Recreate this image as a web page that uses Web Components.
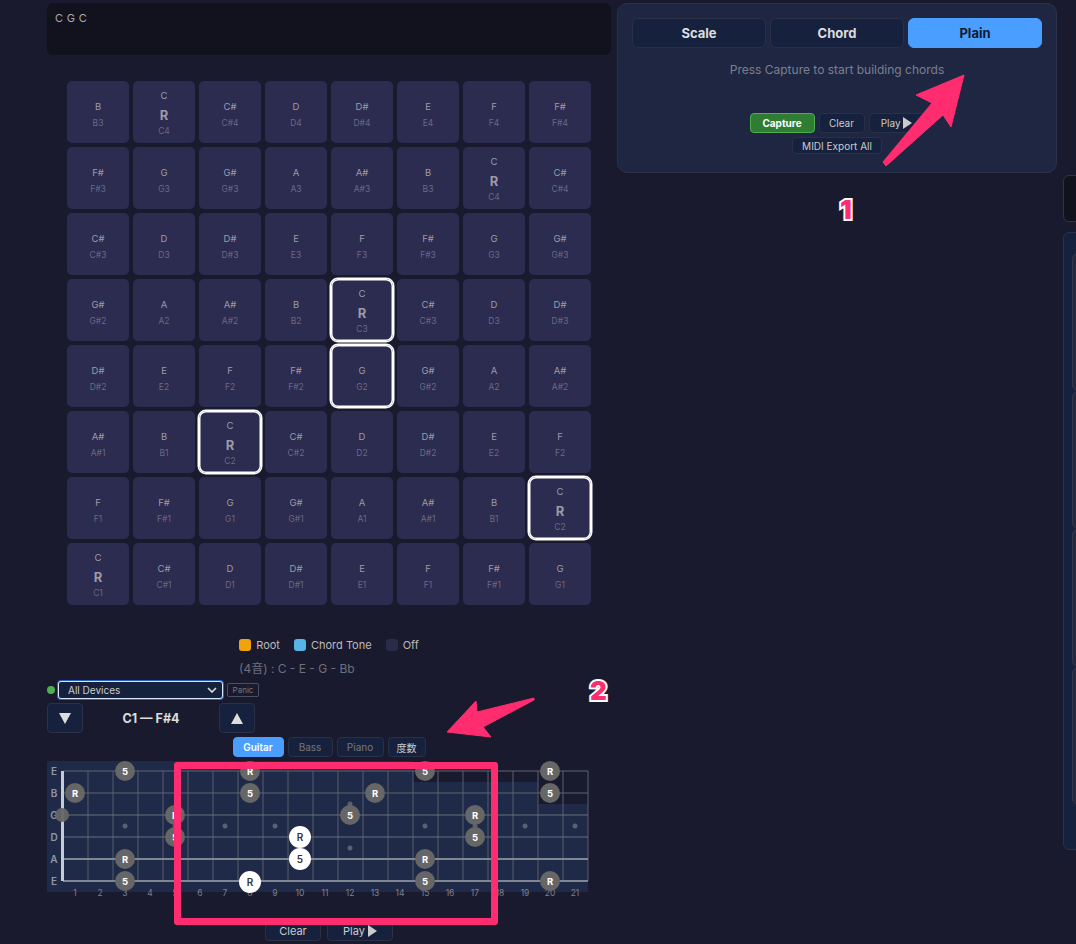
<!DOCTYPE html>
<html>
<head>
<meta charset="utf-8">
<style>
  html, body { margin: 0; height: 944px; overflow: hidden; background: #1a1a2e; }
  body { font-family: Inter, "Noto Sans CJK JP", sans-serif; color: #ccc; position: relative; }
</style>
</head>
<body>
<app-shell></app-shell>
<script>
const NOTES = ['C', 'C#', 'D', 'D#', 'E', 'F', 'F#', 'G', 'G#', 'A', 'A#', 'B'];

class TabButton extends HTMLElement {
  connectedCallback() {
    this.attachShadow({ mode: 'open' });
    this.shadowRoot.innerHTML = `
      <style>
        :host { display: flex; align-items: center; justify-content: center; box-sizing: border-box;
          background: #16213e; border: 1px solid #2a3045; border-radius: 4px; color: #ccc;
          font-size: 10px; white-space: nowrap; height: 20px; }
        :host([variant=active]) { background: #4a9eff; border-color: #4a9eff; color: #fff; font-weight: 600; }
        :host([variant=capture]) { background: #2e7d32; border-color: #4caf50; color: #fff; font-weight: 700; }
        :host([variant=dim]) { color: #777; }
        :host([variant=big]) { height: 30px; flex: 1; font-size: 13px; font-weight: 700; border-radius: 6px; color: #ddd; }
        :host([variant=bigactive]) { height: 30px; flex: 1; font-size: 13px; font-weight: 700; border-radius: 6px;
          background: #4a9eff; border-color: #4a9eff; color: #111a2e; }
      </style>
      <slot></slot>
    `;
  }
}
customElements.define('tab-button', TabButton);

class ChordPanel extends HTMLElement {
  connectedCallback() {
    this.attachShadow({ mode: 'open' });
    this.shadowRoot.innerHTML = `
      <style>
        :host { display: flex; flex-direction: column; box-sizing: border-box; width: 440px; height: 170px;
          background: #1e2642; border: 1px solid #2b3148; border-radius: 10px; padding: 14px 14px 0; }
        .tabs { display: flex; gap: 4px; }
        .hint { text-align: center; color: #7d7f8c; font-size: 12px; margin-top: 15px; height: 14px; line-height: 14px; }
        .row { display: flex; justify-content: center; gap: 4px; margin-top: 36px; }
        .row2 { display: flex; justify-content: center; margin-top: 4px; }
      </style>
      <div class="tabs">
        <tab-button variant="big">Scale</tab-button>
        <tab-button variant="big">Chord</tab-button>
        <tab-button variant="bigactive">Plain</tab-button>
      </div>
      <div class="hint">Press Capture to start building chords</div>
      <div class="row">
        <tab-button variant="capture" style="width:65px">Capture</tab-button>
        <tab-button style="width:46px">Clear</tab-button>
        <tab-button style="width:56px">Play&nbsp;<svg width="9" height="12" viewBox="0 0 9 12"><path d="M0 0L9 6L0 12Z" fill="#ccc"/></svg></tab-button>
      </div>
      <div class="row2"><tab-button style="width:90px;height:17px">MIDI Export All</tab-button></div>
    `;
  }
}
customElements.define('chord-panel', ChordPanel);

class PadCell extends HTMLElement {
  connectedCallback() {
    this.attachShadow({ mode: 'open' });
    const note = this.getAttribute('note');
    const name = this.getAttribute('name');
    const root = note === 'C';
    this.shadowRoot.innerHTML = `
      <style>
        :host { display: flex; flex-direction: column; align-items: center; box-sizing: border-box;
          width: 62px; height: 62px; background: #2c2b50; border-radius: 5px; padding-top: ${root ? 9 : 20}px; }
        :host([on]) { box-shadow: 0 0 0 1.5px #fff, inset 0 0 0 1.5px #fff; border-radius: 7px; }
        .n { font-size: 9.5px; line-height: 12px; color: #9c9ca8; }
        .r { font-size: 13px; line-height: 16px; font-weight: 700; color: #9c9ca8; margin-top: 5px; }
        .o { font-size: 8.5px; line-height: 11px; color: #6a6a84; margin-top: ${root ? 3 : 5}px; }
      </style>
      <div class="n">${note}</div>
      ${root ? '<div class="r">R</div>' : ''}
      <div class="o">${name}</div>
    `;
  }
}
customElements.define('pad-cell', PadCell);

class PadGrid extends HTMLElement {
  connectedCallback() {
    this.attachShadow({ mode: 'open' });
    const on = ['3,4', '4,4', '5,2', '6,7'];
    let cells = '';
    for (let r = 0; r < 8; r++) {
      for (let c = 0; c < 8; c++) {
        const midi = 12 + (7 - r) * 5 + c; // C1 = 12 bottom left, rows go up a fourth
        const note = NOTES[midi % 12];
        const name = note + Math.floor(midi / 12);
        cells += `<pad-cell note="${note}" name="${name}" ${on.includes(r + ',' + c) ? 'on' : ''}></pad-cell>`;
      }
    }
    this.shadowRoot.innerHTML = `
      <style>
        :host { display: grid; grid-template-columns: repeat(8, 62px); grid-auto-rows: 62px; gap: 4px;
          margin: 26px 0 0 20px; width: 524px; }
      </style>
      ${cells}
    `;
  }
}
customElements.define('pad-grid', PadGrid);

class PadLegend extends HTMLElement {
  connectedCallback() {
    this.attachShadow({ mode: 'open' });
    this.shadowRoot.innerHTML = `
      <style>
        :host { display: flex; justify-content: center; gap: 14px; font-size: 11px; color: #bbb; height: 14px; align-items: center; margin-top: 33px; }
        span { display: flex; align-items: center; gap: 5px; }
        i { width: 12px; height: 12px; border-radius: 3px; display: block; }
      </style>
      <span><i style="background:#f0a30a"></i>Root</span>
      <span><i style="background:#56b4e9"></i>Chord Tone</span>
      <span><i style="background:#2a2a4a"></i>Off</span>
    `;
  }
}
customElements.define('pad-legend', PadLegend);

class DeviceBar extends HTMLElement {
  connectedCallback() {
    this.attachShadow({ mode: 'open' });
    this.shadowRoot.innerHTML = `
      <style>
        :host { display: flex; align-items: center; height: 18px; margin-top: 4px; }
        .dot { width: 8px; height: 8px; border-radius: 50%; background: #4caf50; margin-right: 3px; }
        .sel { box-sizing: border-box; width: 165px; height: 18px; background: #16213e; border: 1px solid #d8e6fb;
          box-shadow: 0 0 0 1px #2a62c4; border-radius: 3px; color: #ccc; font-size: 10px; display: flex;
          align-items: center; justify-content: space-between; padding: 0 5px 0 9px; }
        .panic { box-sizing: border-box; width: 32px; height: 14px; margin-left: 4px; border: 1px solid #4a5063;
          border-radius: 2px; color: #777; font-size: 8px; display: flex; align-items: center; justify-content: center; }
      </style>
      <div class="dot"></div>
      <div class="sel">All Devices
        <svg width="10" height="6" viewBox="0 0 10 6"><path d="M1 1L5 5L9 1" fill="none" stroke="#ddd" stroke-width="1.6"/></svg>
      </div>
      <div class="panic">Panic</div>
    `;
  }
}
customElements.define('device-bar', DeviceBar);

class OctaveBar extends HTMLElement {
  connectedCallback() {
    this.attachShadow({ mode: 'open' });
    this.shadowRoot.innerHTML = `
      <style>
        :host { display: flex; align-items: center; height: 30px; margin-top: 4px; width: 208px; justify-content: space-between; }
        .b { box-sizing: border-box; width: 36px; height: 30px; background: #16213e; border: 1px solid #2a3045; border-radius: 4px;
          display: flex; align-items: center; justify-content: center; }
        .l { font-size: 12.5px; font-weight: 700; color: #ddd; }
      </style>
      <div class="b"><svg width="12" height="11" viewBox="0 0 12 11"><path d="M0 0H12L6 11Z" fill="#ddd"/></svg></div>
      <div class="l">C1 — F#4</div>
      <div class="b"><svg width="12" height="11" viewBox="0 0 12 11"><path d="M0 11H12L6 0Z" fill="#ddd"/></svg></div>
    `;
  }
}
customElements.define('octave-bar', OctaveBar);

class FretBoard extends HTMLElement {
  connectedCallback() {
    this.attachShadow({ mode: 'open' });
    const ys = [771, 793, 815, 837, 859, 881].map(y => y - 761);
    const names = ['E', 'B', 'G', 'D', 'A', 'E'];
    const fx = n => 3 + 25 * n; // fret number to x centre, board starts at page x 47
    let s = '';
    // board background, upper right part is cut away
    s += `<path d="M0 0H366V21H490V43H541V131H0Z" fill="#1e2a47"/>`;
    for (let i = 0; i <= 21; i++) {
      const x = 16 + 25 * i;
      s += `<line x1="${x}" y1="10" x2="${x}" y2="120" stroke="#4d5566" stroke-width="1.2"/>`;
    }
    ys.forEach((y, i) => {
      const c = i < 2 ? '#5d6473' : i < 4 ? '#68707e' : '#7f8792';
      s += `<line x1="16" y1="${y}" x2="541" y2="${y}" stroke="${c}" stroke-width="${i < 4 ? 1.2 : 1.8}"/>`;
      s += `<text x="7" y="${y + 4}" font-size="10" font-weight="600" fill="#8f97a8" text-anchor="middle">${names[i]}</text>`;
    });
    s += `<rect x="14" y="10" width="3" height="110" fill="#c4ccd8"/>`;
    [[3, 65], [5, 65], [7, 65], [9, 65], [12, 43], [12, 87], [15, 65], [17, 65], [19, 65], [21, 65]].forEach(([n, y]) => {
      s += `<circle cx="${fx(n)}" cy="${y}" r="2.5" fill="#59616f"/>`;
    });
    for (let n = 1; n <= 21; n++) {
      s += `<text x="${fx(n)}" y="135" font-size="8.5" fill="#7c8290" text-anchor="middle">${n}</text>`;
    }
    const dots = [
      [0, 3, '5'], [0, 8, 'R'], [0, 15, '5'], [0, 20, 'R'],
      [1, 1, 'R'], [1, 8, '5'], [1, 13, 'R'], [1, 20, '5'],
      [2, 5, 'R'], [2, 12, '5'], [2, 17, 'R'],
      [3, 5, '5'], [3, 17, '5'],
      [4, 3, 'R'], [4, 15, 'R'],
      [5, 3, '5'], [5, 15, '5'], [5, 20, 'R']
    ];
    s += `<circle cx="15" cy="${ys[2]}" r="7" fill="#666" fill-opacity=".95"/>`;
    dots.forEach(([st, n, t]) => {
      s += `<circle cx="${fx(n)}" cy="${ys[st]}" r="10" fill="#666"/>`;
      s += `<text x="${fx(n)}" y="${ys[st] + 3.5}" font-size="9.5" font-weight="700" fill="#fff" text-anchor="middle">${t}</text>`;
    });
    [[3, 10, 'R', 0], [4, 10, '5', 0], [5, 8, 'R', 1]].forEach(([st, n, t, d]) => {
      s += `<circle cx="${fx(n)}" cy="${ys[st] + d}" r="11" fill="#fff"/>`;
      s += `<text x="${fx(n)}" y="${ys[st] + d + 3.5}" font-size="10" font-weight="600" fill="#333" text-anchor="middle">${t}</text>`;
    });
    this.shadowRoot.innerHTML = `
      <style>
        :host { display: block; height: 141px; margin-top: 4px; }
        svg { display: block; overflow: visible; }
        text { font-family: Inter, sans-serif; }
      </style>
      <svg width="564" height="141" viewBox="0 0 564 141">${s}</svg>
    `;
  }
}
customElements.define('fret-board', FretBoard);

class MarkUp extends HTMLElement {
  connectedCallback() {
    this.attachShadow({ mode: 'open' });
    this.shadowRoot.innerHTML = `
      <style>
        :host { position: absolute; left: 0; top: 0; width: 1076px; height: 944px; pointer-events: none; }
        svg { position: absolute; left: 0; top: 0; }
        .num { position: absolute; font: 900 26px/30px Inter, sans-serif; color: #ff2d6f;
          -webkit-text-stroke: 4px #fff; paint-order: stroke fill; }
        .box { position: absolute; left: 174px; top: 762px; width: 324px; height: 163px; box-sizing: border-box;
          border: 7px solid #ff2d6f; border-radius: 3px; }
      </style>
      <svg width="1076" height="944">
        <path d="M964 75L916 95L932 103L883 162L886 166L943 115L951 127Z" fill="#ff2d6f" stroke="#ff2d6f" stroke-linejoin="round"/>
        <path d="M447 732L476 701L477 712L534 698L534 700L483 727L491 737Z" fill="#ff2d6f" stroke="#ff2d6f" stroke-linejoin="round"/>
      </svg>
      <div class="num" style="left:840px;top:195px">1</div>
      <div class="num" style="left:590px;top:676px">2</div>
      <div class="box"></div>
    `;
  }
}
customElements.define('mark-up', MarkUp);

class AppShell extends HTMLElement {
  connectedCallback() {
    this.attachShadow({ mode: 'open' });
    this.shadowRoot.innerHTML = `
      <style>
        :host { display: flex; gap: 6px; padding: 3px 0 0 47px; width: 1076px; box-sizing: border-box; }
        .left { width: 564px; flex: none; }
        .right { flex: none; width: 470px; }
        .text { box-sizing: border-box; height: 52px; background: #12121f; border-radius: 6px; padding: 8px 8px; font-size: 11px; letter-spacing: .3px; color: #aaa; }
        .chordname { font-size: 12px; color: #6e7080; padding-left: 192px; height: 16px; line-height: 16px; margin-top: 9px; }
        .tabs { display: flex; gap: 4px; justify-content: center; margin-top: 4px; }
        .bottom { display: flex; gap: 6px; justify-content: center; margin-top: 19px; }
        .bottom tab-button { font-size: 11px; }
        .side { margin-left: 446px; box-sizing: border-box; }
        .side .a { width: 40px; height: 45px; margin-top: 2px; background: #12121f; border: 1px solid #2f3346; border-radius: 6px; }
        .side .b { width: 40px; height: 618px; margin-top: 10px; background: #16213e; border: 1px solid #2b3148; border-radius: 6px; padding: 20px 0 0 8px; box-sizing: border-box; }
        .side .b div { height: 136px; background: #25293f; border: 1px solid #32374d; border-radius: 6px; }
      </style>
      <div class="left">
        <div class="text">C G C</div>
        <pad-grid></pad-grid>
        <pad-legend></pad-legend>
        <div class="chordname">(4音) : C - E - G - Bb</div>
        <device-bar></device-bar>
        <octave-bar></octave-bar>
        <div class="tabs">
          <tab-button variant="active" style="width:51px">Guitar</tab-button>
          <tab-button variant="dim" style="width:45px">Bass</tab-button>
          <tab-button variant="dim" style="width:47px">Piano</tab-button>
          <tab-button style="width:38px">度数</tab-button>
        </div>
        <fret-board></fret-board>
        <div class="bottom">
          <tab-button style="width:56px">Clear</tab-button>
          <tab-button style="width:66px">Play&nbsp;<svg width="9" height="12" viewBox="0 0 9 12"><path d="M0 0L9 6L0 12Z" fill="#ccc"/></svg></tab-button>
        </div>
      </div>
      <div class="right">
        <chord-panel></chord-panel>
        <div class="side">
          <div class="a"></div>
          <div class="b"><div></div><div></div><div></div><div></div></div>
        </div>
      </div>
    `;
    document.body.appendChild(document.createElement('mark-up'));
  }
}
customElements.define('app-shell', AppShell);
</script>
</body>
</html>
